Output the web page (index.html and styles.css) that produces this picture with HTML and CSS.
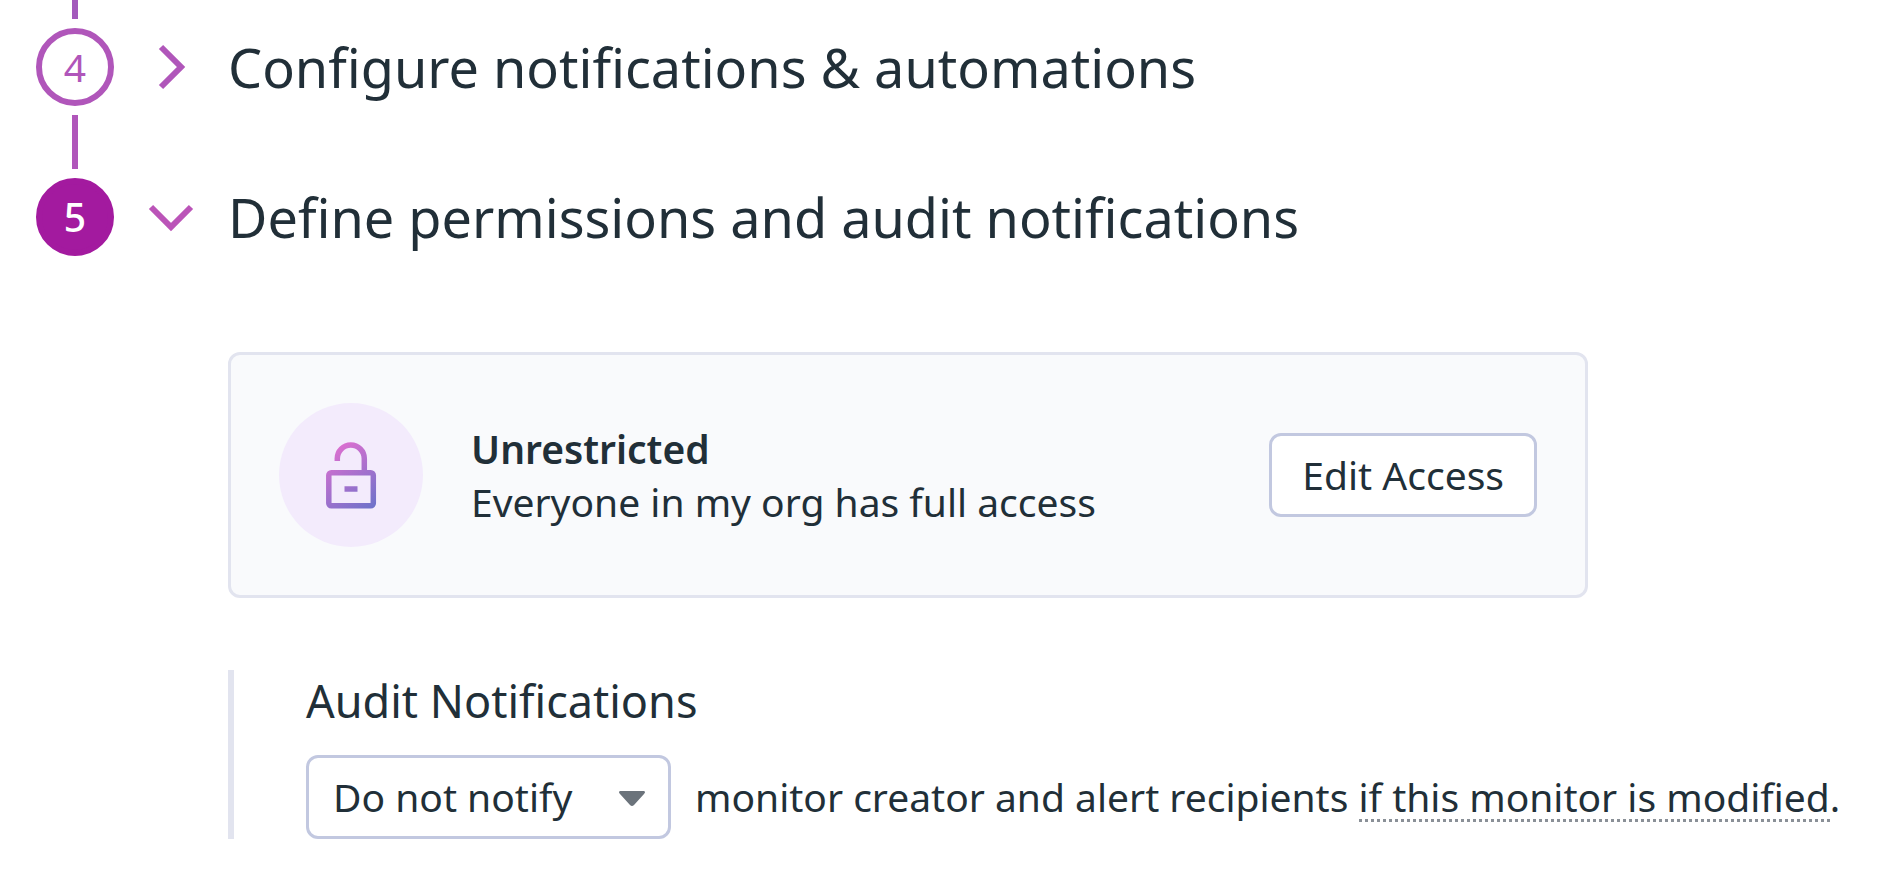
FILE: index.html
```html
<!DOCTYPE html>
<html lang="en">
<head>
<meta charset="utf-8">
<title>Monitor settings</title>
<link rel="stylesheet" href="styles.css">
</head>
<body>
<main class="steps">
  <section class="step">
    <div class="rail">
      <span class="connector connector-lead"></span>
      <span class="marker">4</span>
      <span class="connector"></span>
    </div>
    <div class="step-main step-main-lead">
      <h2 class="step-heading">
        <button class="step-toggle" type="button" aria-expanded="false">
          <svg class="chevron" viewBox="0 0 48 48" aria-hidden="true"><path d="M14 4 34 24 14 44" fill="none" stroke="#b056ba" stroke-width="6"/></svg>
          <span>Configure notifications &amp; automations</span>
        </button>
      </h2>
    </div>
  </section>

  <section class="step">
    <div class="rail">
      <span class="marker marker-active">5</span>
    </div>
    <div class="step-main">
      <h2 class="step-heading">
        <button class="step-toggle" type="button" aria-expanded="true">
          <svg class="chevron" viewBox="0 0 48 48" aria-hidden="true"><path d="M4 14 24 34 44 14" fill="none" stroke="#bb54b8" stroke-width="6"/></svg>
          <span>Define permissions and audit notifications</span>
        </button>
      </h2>
      <div class="step-body">
        <div class="access-card">
          <span class="access-icon">
            <svg class="lock" viewBox="0 0 72 72" aria-hidden="true">
              <defs>
                <linearGradient id="lock-fill" gradientUnits="userSpaceOnUse" x1="18" y1="12" x2="58" y2="68">
                  <stop offset="0" stop-color="#d96fd0"/>
                  <stop offset="1" stop-color="#6f72ca"/>
                </linearGradient>
              </defs>
              <g fill="none" stroke="url(#lock-fill)" stroke-width="5.500">
                <path d="M22.300 22V19.500a13.500 13.500 0 0 1 27 0V34"/>
                <rect x="13.800" y="33.800" width="44.500" height="33" rx="2.500"/>
                <path d="M29.500 50H42.500"/>
              </g>
            </svg>
          </span>
          <div class="access-text">
            <strong>Unrestricted</strong>
            <span>Everyone in my org has full access</span>
          </div>
          <button class="edit-button" type="button">Edit Access</button>
        </div>

        <div class="audit">
          <h3 class="audit-title">Audit Notifications</h3>
          <div class="audit-row">
            <span class="select-wrap">
              <select class="notify-select" aria-label="Audit notifications">
                <option>Do not notify</option>
                <option>Notify</option>
              </select>
              <svg class="caret" viewBox="0 0 26 15" aria-hidden="true"><path d="M1 0H25Q27 1 25 3L15 14Q13 16 11 14L1 3Q-1 1 1 0Z" fill="#6b737b"/></svg>
            </span>
            <span>monitor creator and alert recipients <span class="hint">if this monitor is modified</span>.</span>
          </div>
        </div>
      </div>
    </div>
  </section>
</main>
</body>
</html>
```
FILE: styles.css
```css
* {
  box-sizing: border-box;
}

body {
  margin: 0;
  background: #fff;
  color: #212f38;
  font-family: "Noto Sans", sans-serif;
  font-size: 39px;
  line-height: 54px;
}

button,
select {
  color: inherit;
  font: inherit;
}

.steps {
  padding: 0 36px;
}

.step {
  display: flex;
  gap: 33px;
}

.rail {
  display: flex;
  flex: none;
  flex-direction: column;
  align-items: center;
  width: 78px;
}

.marker {
  display: flex;
  align-items: center;
  justify-content: center;
  width: 78px;
  height: 78px;
  border: 6px solid #b056ba;
  border-radius: 50%;
  color: #b056ba;
}

.marker-active {
  border-color: #a31a9f;
  background: #a31a9f;
  color: #fff;
  font-weight: 500;
}

.connector {
  width: 6px;
  height: 54px;
  margin: 9px 0;
  background: #b056ba;
}

.connector-lead {
  height: 19px;
  margin-top: 0;
  background: #a45abc;
}

.step-main {
  flex: 1;
  min-width: 0;
}

.step-main-lead {
  padding-top: 28px;
}

.step-heading {
  margin: 0;
  font-size: 54px;
  font-weight: 400;
  line-height: 78px;
}

.step-toggle {
  display: flex;
  align-items: center;
  gap: 33px;
  padding: 0;
  border: 0;
  background: none;
  text-align: left;
}

.chevron {
  flex: none;
  width: 48px;
  height: 48px;
}

.step-body {
  padding: 96px 0 0 81px;
}

.access-card {
  display: flex;
  align-items: center;
  gap: 48px;
  max-width: 1360px;
  padding: 48px;
  border: 3px solid #e2e4ef;
  border-radius: 12px;
  background: #f9fafc;
}

.access-icon {
  display: flex;
  flex: none;
  align-items: center;
  justify-content: center;
  width: 144px;
  height: 144px;
  border-radius: 50%;
  background: #f3ebfc;
}

.lock {
  width: 72px;
  height: 72px;
}

.access-text {
  display: flex;
  flex: 1;
  flex-direction: column;
  line-height: 53px;
}

.access-text strong {
  font-weight: 600;
}

.edit-button {
  height: 84px;
  padding: 0 30px;
  border: 3px solid #c2c8e0;
  border-radius: 12px;
  background: #fff;
}

.audit {
  margin-top: 72px;
  padding-left: 72px;
  border-left: 6px solid #e2e4ef;
}

.audit-title {
  margin: 0;
  padding-bottom: 23px;
  font-size: 45px;
  font-weight: 400;
  line-height: 62px;
}

.audit-row {
  display: flex;
  align-items: center;
  gap: 24px;
}

.select-wrap {
  position: relative;
  flex: none;
}

.notify-select {
  display: block;
  width: 365px;
  height: 84px;
  padding: 0 72px 0 24px;
  border: 3px solid #c2c8e0;
  border-radius: 12px;
  background: #fff;
  appearance: none;
}

.caret {
  position: absolute;
  top: 36px;
  right: 26px;
  width: 26px;
  height: 15px;
  pointer-events: none;
}

.hint {
  background: repeating-linear-gradient(90deg, #8a9097 0 3px, transparent 3px 6px) left bottom 1px / 100% 3px no-repeat;
}
```
